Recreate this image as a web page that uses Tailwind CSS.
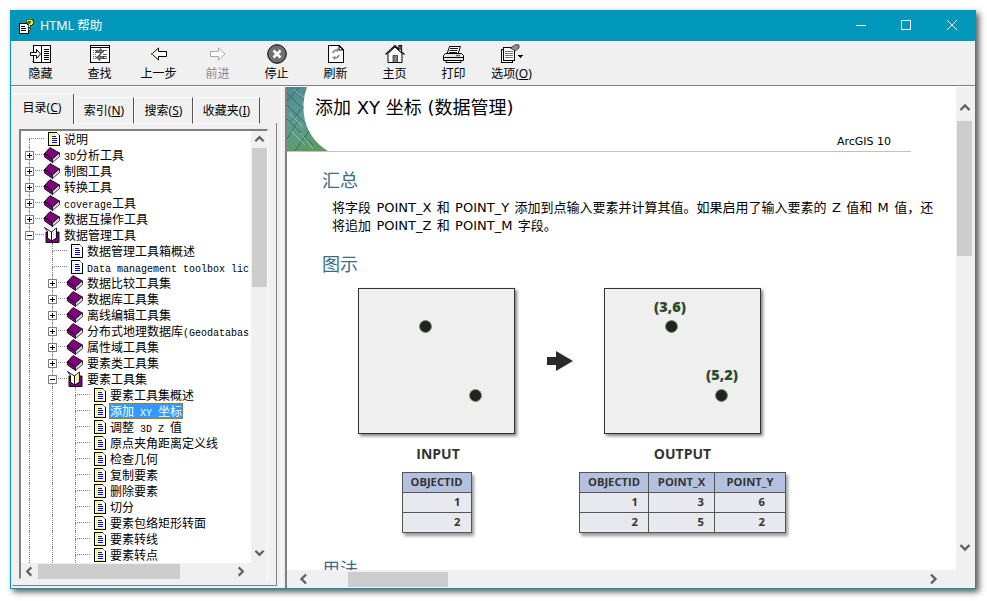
<!DOCTYPE html>
<html lang="en">
<head>
  <meta charset="UTF-8">
  <title>HTML 帮助</title>
  <script src="https://cdn.jsdelivr.net/npm/@tailwindcss/browser@4"></script>
</head>
<body class="bg-white w-[987px] h-[601px] overflow-hidden font-['Noto_Sans','Noto_Sans_CJK_SC',sans-serif] text-[12px] text-black">

  <svg class="hidden">
    <symbol id="doc" viewBox="0 0 12 16" shape-rendering="crispEdges">
      <path d="M.5 1.500H8.500L11.500 4.500V14.500H.5Z" fill="#fff" stroke="#000"/>
      <path d="M9 2h1v1H9zM10 3h1v1h-1z" fill="#808080"/>
      <path d="M2 3h1v1H2zM4 3h1v1H4zM6 3h1v1H6zM2 5h1v1H2zM2 7h1v1H2zM2 9h1v1H2zM2 11h1v1H2zM2 13h1v1H2zM4 13h1v1H4zM6 13h1v1H6zM8 13h1v1H8z" fill="#f0f000"/>
      <path d="M4 5h4v1H4zM4 7h5v1H4zM4 9h5v1H4zM4 11h5v1H4z" fill="#0000ff"/>
    </symbol>
    <symbol id="book" viewBox="0 0 16 16">
      <path d="M.5 6.500 6 .5 15.500 6 8.500 12Z" fill="#800080" stroke="#000" stroke-width=".8"/>
      <path d="M.5 6.500 8.500 12V15.500L.5 10Z" fill="#800080" stroke="#000" stroke-width=".8"/>
      <path d="M8.500 12 15.500 6V9.500L8.500 15.500Z" fill="#fff" stroke="#000" stroke-width=".8"/>
      <path d="M9.500 13.500 14.500 9" stroke="#999" stroke-width=".7"/>
    </symbol>
    <symbol id="open" viewBox="0 0 16 16">
      <path d="M2 5V15.500H15V5Z" fill="#800080" stroke="#000" stroke-width=".9"/>
      <path d="M.5.500 7.500 5V14L3.500 11V4.500Z" fill="#fff" stroke="#000" stroke-width=".9"/>
      <path d="M7.500 5 12.500 1V11L7.500 14Z" fill="#fff" stroke="#000" stroke-width=".9"/>
      <path d="M9 5h1v1H9zM11 4h1v1h-1zM9 7h1v1H9zM11 6h1v1h-1zM9 9h1v1H9zM11 8h1v1h-1z" fill="#e0e000"/>
    </symbol>
    <symbol id="up" viewBox="0 0 12 8"><path d="M1.500 6.500 6 2l4.500 4.500" fill="none" stroke="#606060" stroke-width="2.400"/></symbol>
    <symbol id="down" viewBox="0 0 12 8"><path d="M1.500 1.500 6 6l4.500-4.500" fill="none" stroke="#606060" stroke-width="2.400"/></symbol>
    <symbol id="left" viewBox="0 0 8 12"><path d="M6.500 1.500 2 6l4.500 4.500" fill="none" stroke="#606060" stroke-width="2.400"/></symbol>
    <symbol id="right" viewBox="0 0 8 12"><path d="M1.500 1.500 6 6l-4.500 4.500" fill="none" stroke="#606060" stroke-width="2.400"/></symbol>
  </svg>

  <div class="mt-[10px] ml-[10px] w-[966px] h-[579px] flex flex-col border border-[#0097ba] bg-[#f0f0f0] shadow-[3px_3px_6px_rgba(0,0,0,0.65)]">

    <!-- title bar -->
    <div class="h-[30px] shrink-0 bg-[#0097ba] flex items-center text-white">
      <svg class="ml-[8px] w-[15px] h-[15px]" viewBox="0 0 15 15" shape-rendering="crispEdges">
        <path d="M.5 4.500H7.500L9.500 6.500V14.500H.5Z" fill="#fff" stroke="#000"/>
        <path d="M2 7h4v1H2zM2 9h5v1H2zM2 11h5v1H2z" fill="#000"/>
        <path d="M7 3V1h1V0h5v1h1v4h-1v1h-2v2H9V5h1V4h1V2H9v1Z" fill="#ffe800" stroke="#000" stroke-width=".5"/>
        <path d="M9 9h2v2H9z" fill="#ffe800" stroke="#000" stroke-width=".5"/>
      </svg>
      <span class="ml-[6px] text-[12.500px] leading-none">HTML 帮助</span>
      <div class="ml-auto flex items-center pb-[2px]">
        <svg class="w-[10px] h-[10px] mr-[35px]" viewBox="0 0 10 10"><path d="M0 5.500h10" stroke="#fff"/></svg>
        <svg class="w-[10px] h-[10px] mr-[36px]" viewBox="0 0 10 10"><path d="M.5.500h9v9h-9z" fill="none" stroke="#fff"/></svg>
        <svg class="w-[10px] h-[10px] mr-[18px]" viewBox="0 0 10 10"><path d="M0 0l10 10M10 0 0 10" stroke="#fff"/></svg>
      </div>
    </div>

    <!-- toolbar -->
    <div class="h-[45px] shrink-0 flex items-start border-b border-[#808080]">
      <button class="w-[59px] flex flex-col items-center">
        <svg class="mt-[3px] w-[22px] h-[20px]" viewBox="0 0 22 20" shape-rendering="crispEdges">
          <path d="M3.500 1.500H20.500V18.500H3.500Z" fill="#fff" stroke="#000"/>
          <path d="M11 2h1v16h-1z" fill="#000"/>
          <path d="M14 5h5v1h-5zM14 7h5v1h-5zM14 9h5v1h-5zM14 11h5v1h-5zM14 13h5v1h-5zM14 15h5v1h-5z" fill="#000"/>
          <path d="M.5 8.500H6.500V5.500L10.500 10 6.500 14.500V11.500H.5Z" fill="#fff" stroke="#000" shape-rendering="geometricPrecision"/>
          <path d="M2 17h1v1H2z" fill="#00c000"/>
        </svg>
        <span class="mt-[1px] leading-[18px]">隐藏</span>
      </button>
      <button class="w-[59px] flex flex-col items-center">
        <svg class="mt-[3px] w-[20px] h-[20px]" viewBox="0 0 20 20" shape-rendering="crispEdges">
          <path d="M.5 1.500H19.500V18.500H.5Z" fill="#fff" stroke="#000"/>
          <path d="M.5 3.500H19.500" stroke="#000"/>
          <path d="M3 6h1v1H3zM5 6h1v1H5zM3 8h1v1H3zM5 8h1v1H5zM3 10h1v1H3zM5 10h1v1H5zM3 12h1v1H3zM5 12h1v1H5zM3 14h1v1H3zM5 14h1v1H5zM13 6h4v1h-4zM13 10h4v1h-4zM13 12h4v1h-4zM13 14h4v1h-4z" fill="#666"/>
          <path d="M6 6.500H10V4.500L14 7.500 10 10.500V8.500H6Z" fill="#777" stroke="#000" stroke-width=".5" shape-rendering="geometricPrecision"/>
          <path d="M14 12.500H10V10.500L6 13.500 10 16.500V14.500H14Z" fill="#777" stroke="#000" stroke-width=".5" shape-rendering="geometricPrecision"/>
        </svg>
        <span class="mt-[1px] leading-[18px]">查找</span>
      </button>
      <button class="w-[59px] flex flex-col items-center">
        <svg class="mt-[3px] w-[20px] h-[20px]" viewBox="0 0 20 20">
          <path d="M3 10 9.500 4V7.500H17.500V12.500H9.500V16Z" fill="#fff" stroke="#000"/>
          <rect x="2" y="9" width="2" height="2" fill="#00b000"/>
        </svg>
        <span class="mt-[1px] leading-[18px]">上一步</span>
      </button>
      <button class="w-[59px] flex flex-col items-center text-[#8a8a8a]">
        <svg class="mt-[3px] w-[20px] h-[20px]" viewBox="0 0 20 20">
          <path d="M17 10 10.500 4V7.500H2.500V12.500H10.500V16Z" fill="#fff" stroke="#a8a8a8"/>
        </svg>
        <span class="mt-[1px] leading-[18px]">前进</span>
      </button>
      <button class="w-[59px] flex flex-col items-center">
        <svg class="mt-[3px] w-[20px] h-[20px]" viewBox="0 0 20 20">
          <circle cx="10" cy="10" r="9.300" fill="#6f6f6f" stroke="#000"/>
          <path d="M6.500 6.500l7 7M13.500 6.500l-7 7" stroke="#fff" stroke-width="2.600"/>
        </svg>
        <span class="mt-[1px] leading-[18px]">停止</span>
      </button>
      <button class="w-[59px] flex flex-col items-center">
        <svg class="mt-[3px] w-[20px] h-[20px]" viewBox="0 0 20 20">
          <path d="M2.500 1.500H13L17.500 6V18.500H2.500Z" fill="#fff" stroke="#000" shape-rendering="crispEdges"/>
          <path d="M13 1.500V6H17.500" fill="none" stroke="#000"/>
          <path d="M7 9a3.500 3.500 0 0 1 5-2.500" fill="none" stroke="#888" stroke-width="1.800"/>
          <path d="M11 4l3 2.500L10.500 8Z" fill="#888"/>
          <path d="M13 11a3.500 3.500 0 0 1-5 2.500" fill="none" stroke="#888" stroke-width="1.800"/>
          <path d="M9 16l-3-2.500L9.500 12Z" fill="#888"/>
        </svg>
        <span class="mt-[1px] leading-[18px]">刷新</span>
      </button>
      <button class="w-[59px] flex flex-col items-center">
        <svg class="mt-[3px] w-[20px] h-[20px]" viewBox="0 0 20 20">
          <path d="M.5 10.500 10 1.500 14 5.500V1.500H16.500V8L19.500 10.500" fill="none" stroke="#000" stroke-width="1.200"/>
          <path d="M3 9.500V18.500H17V9.500L10 3Z" fill="#fff" stroke="#000"/>
          <path d="M8 11.500H12.500V18.500H8Z" fill="#808080" stroke="#000" stroke-width=".6"/>
          <path d="M15 2h1.500v4H15z" fill="#555"/>
        </svg>
        <span class="mt-[1px] leading-[18px]">主页</span>
      </button>
      <button class="w-[59px] flex flex-col items-center">
        <svg class="mt-[3px] w-[21px] h-[20px]" viewBox="0 0 21 20">
          <path d="M6.500 2.500H17.500L15 10H4Z" fill="#fff" stroke="#000"/>
          <path d="M7 4.500h8M6.500 6.500h8M6 8.500h8" stroke="#000" stroke-width=".9"/>
          <path d="M2.500 9.500H18.500L20.500 11.500V16.500H.5V11.500Z" fill="#e6e6e6" stroke="#000"/>
          <path d="M1 13.500h19" stroke="#000"/>
          <path d="M3 16.500H18V18.500H3Z" fill="#fff" stroke="#000"/>
          <path d="M13 11.500h4" stroke="#666" stroke-width="1.500"/>
          <rect x="18" y="17" width="1" height="1" fill="#00b0c0"/>
        </svg>
        <span class="mt-[1px] leading-[18px]">打印</span>
      </button>
      <button class="w-[59px] flex flex-col items-center -ml-px">
        <svg class="mt-[3px] w-[22px] h-[20px]" viewBox="0 0 22 20" shape-rendering="crispEdges">
          <path d="M.5 5.500H11.500V18.500H.5Z" fill="#fff" stroke="#000"/>
          <path d="M2.500 3.500H13.500V16.500H2.500Z" fill="#fff" stroke="#000"/>
          <path d="M4 7h8v1H4zM4 9h8v1H4zM4 11h8v1H4zM4 13h8v1H4z" fill="#777"/>
          <path d="M9 4 15 .5 18 1V4L14 7 11 5Z" fill="#909090" stroke="#000" stroke-width=".6" shape-rendering="geometricPrecision"/>
          <path d="M17 11h5v1h-1v1h-1v1h-1v-1h-1v-1h-1z" fill="#000"/>
        </svg>
        <span class="mt-[1px] leading-[18px]">选项(<u>O</u>)</span>
      </button>
    </div>

    <div class="flex-1 min-h-0 flex border-t border-white">

      <!-- navigation pane -->
      <div class="w-[270px] shrink-0 flex flex-col pl-px pt-[6px] pb-[2px]">
        <div class="flex items-end h-[31px] relative z-10 -mb-px">
          <div class="h-[31px] w-[62px] flex items-center justify-center bg-[#f0f0f0] border border-b-0 border-white border-r-[#555] rounded-t-[2px] pb-[3px] pr-[2px]">目录(<u>C</u>)</div>
          <div class="h-[27px] w-[60px] flex items-center justify-center border-t border-l border-white border-r border-r-[#555] border-b border-b-white">索引(<u>N</u>)</div>
          <div class="h-[27px] w-[59px] flex items-center justify-center border-t border-l border-white border-r border-r-[#555] border-b border-b-white">搜索(<u>S</u>)</div>
          <div class="h-[27px] w-[67px] flex items-center justify-center border-t border-l border-white border-r border-r-[#555] border-b border-b-white">收藏夹(<u>I</u>)</div>
        </div>
        <div class="flex-1 min-h-0 w-[265px] border-l border-white border-r border-r-[#808080] border-b border-b-[#808080] pl-[6px] pr-[8px] pt-[6px] pb-[6px]">
          <!-- tree box -->
          <div class="h-full grid grid-cols-[230px_16px] grid-rows-[432px_16px] border border-[#808080] border-t-2 border-l-2 border-r-white border-b-white bg-white">
            <div id="tree" class="overflow-hidden pl-[8px] whitespace-nowrap"></div>
            <div class="bg-[#f0f0f0] flex flex-col items-center">
              <svg class="mt-[4px] w-[11px] h-[8px]"><use href="#up"/></svg>
              <div class="mt-[5px] w-[15px] h-[139px] bg-[#cdcdcd]"></div>
              <svg class="mt-auto mb-[6px] w-[11px] h-[8px]"><use href="#down"/></svg>
            </div>
            <div class="bg-[#f0f0f0] flex items-center">
              <svg class="ml-[4px] w-[8px] h-[11px]"><use href="#left"/></svg>
              <div class="ml-[5px] w-[142px] h-[15px] bg-[#cdcdcd]"></div>
              <svg class="ml-auto mr-[6px] w-[8px] h-[11px]"><use href="#right"/></svg>
            </div>
            <div class="bg-[#f0f0f0]"></div>
          </div>
        </div>
      </div>

      <!-- splitter -->
      <div class="w-[4px] shrink-0 border-l border-white"></div>

      <!-- content pane -->
      <div class="flex-1 min-w-0 grid grid-cols-[669px_19px] grid-rows-[483px_18px] border-l-2 border-[#808080] bg-[#f0f0f0]">
        <div class="overflow-hidden bg-white font-['DejaVu_Sans','Noto_Sans_CJK_SC',sans-serif]">
          <div class="relative w-[624px] h-[65px] border-b border-[#c4c2b8] flex flex-col justify-between pl-[28px] pr-[20px]">
            <svg class="absolute left-0 top-0 w-[44px] h-[64px]" viewBox="0 0 44 64">
              <defs>
                <linearGradient id="banner" x1="0" y1="0" x2="0.4" y2="1">
                  <stop offset="0" stop-color="#4c8790"/>
                  <stop offset="0.5" stop-color="#5f9c96"/>
                  <stop offset="1" stop-color="#5b9a62"/>
                </linearGradient>
                <clipPath id="bannerclip"><path d="M0 0H20Q14 16 18 34 24 54 41 64H0Z"/></clipPath>
              </defs>
              <g clip-path="url(#bannerclip)">
                <rect width="44" height="64" fill="url(#banner)"/>
                <path d="M0 6 14 20M0 18 20 38M0 32 26 58M4 0 20 16M8 64 22 44M0 52 12 32M12 0 0 14M18 18 4 34" stroke="#2f5f68" stroke-width=".8" fill="none"/>
                <path d="M6 2 18 12M2 26 16 40M4 44 18 58M14 46 26 62" stroke="#9cc8bc" stroke-width=".8" fill="none"/>
              </g>
            </svg>
            <h1 class="relative text-[18px] leading-[24px] mt-[9px] font-normal">添加 XY 坐标 (数据管理)</h1>
            <div class="self-end text-[11px] leading-[14px] mb-[2px]">ArcGIS 10</div>
          </div>
          <div class="pl-[35px] whitespace-nowrap">
            <h2 class="mt-[17px] text-[18px] leading-[24px] text-[#3a6d86] font-normal">汇总</h2>
            <p class="mt-[6px] pl-[10px] text-[13px] leading-[18px] [word-spacing:1.250px]">将字段 POINT_X 和 POINT_Y 添加到点输入要素并计算其值。如果启用了输入要素的 Z 值和 M 值，还<br>将追加 POINT_Z 和 POINT_M 字段。</p>
            <h2 class="mt-[18px] text-[18px] leading-[24px] text-[#3a6d86] font-normal">图示</h2>

            <div class="mt-[11px] ml-[36px] flex items-start font-['Open_Sans',sans-serif]">
              <div class="w-[157px] flex flex-col items-center">
                <div class="relative w-[157px] h-[146px] bg-[#efefef] border border-[#333] shadow-[2px_2px_3px_rgba(0,0,0,0.5)]">
                  <div class="absolute left-[60px] top-[31px] w-[13px] h-[13px] rounded-full bg-[#222] border border-[#6f9a5a]"></div>
                  <div class="absolute left-[110px] top-[100px] w-[13px] h-[13px] rounded-full bg-[#222] border border-[#6f9a5a]"></div>
                </div>
                <div class="mt-[10px] pl-[3px] text-[14px] leading-[20px] font-bold text-[#333]">INPUT</div>
                <table class="mt-[8px] border-collapse table-fixed shrink-0 w-[70px] text-[11.200px] font-bold text-[#333] shadow-[2px_3px_3px_rgba(0,0,0,0.4)]">
                  <tr class="h-[20px] bg-[#b4c1de]"><th class="border border-[#555] text-center font-bold">OBJECTID</th></tr>
                  <tr class="h-[20px] bg-[#e8e9ee]"><td class="border border-[#555] text-right pr-[10px]">1</td></tr>
                  <tr class="h-[20px] bg-[#e8e9ee]"><td class="border border-[#555] text-right pr-[10px]">2</td></tr>
                </table>
              </div>
              <svg class="mt-[63px] ml-[32px] mr-[31px] w-[26px] h-[20px]" viewBox="0 0 26 20"><path d="M0 6H9V0L26 10 9 20V14H0Z" fill="#2b2b2b"/></svg>
              <div class="w-[157px] flex flex-col items-center">
                <div class="relative w-[157px] h-[146px] bg-[#efefef] border border-[#333] shadow-[2px_2px_3px_rgba(0,0,0,0.5)]">
                  <div class="absolute left-[43px] top-[8px] w-[44px] text-center text-[14.500px] leading-[20px] font-extrabold text-[#2c4a2c]">(3,6)</div>
                  <div class="absolute left-[60px] top-[31px] w-[13px] h-[13px] rounded-full bg-[#222] border border-[#6f9a5a]"></div>
                  <div class="absolute left-[95px] top-[76px] w-[44px] text-center text-[14.500px] leading-[20px] font-extrabold text-[#2c4a2c]">(5,2)</div>
                  <div class="absolute left-[110px] top-[100px] w-[13px] h-[13px] rounded-full bg-[#222] border border-[#6f9a5a]"></div>
                </div>
                <div class="mt-[10px] text-[14px] leading-[20px] font-bold text-[#333]">OUTPUT</div>
                <table class="mt-[8px] border-collapse table-fixed shrink-0 w-[206px] text-[11.200px] font-bold text-[#333] shadow-[2px_3px_3px_rgba(0,0,0,0.4)]">
                  <tr class="h-[20px] bg-[#b4c1de]">
                    <th class="w-[69px] border border-[#555] text-center font-bold">OBJECTID</th>
                    <th class="w-[66px] border border-[#555] text-center font-bold">POINT_X</th>
                    <th class="w-[71px] border border-[#555] text-center font-bold">POINT_Y</th>
                  </tr>
                  <tr class="h-[20px] bg-[#e8e9ee]"><td class="border border-[#555] text-right pr-[10px]">1</td><td class="border border-[#555] text-right pr-[10px]">3</td><td class="border border-[#555] text-right pr-[20px]">6</td></tr>
                  <tr class="h-[20px] bg-[#e8e9ee]"><td class="border border-[#555] text-right pr-[10px]">2</td><td class="border border-[#555] text-right pr-[10px]">5</td><td class="border border-[#555] text-right pr-[20px]">2</td></tr>
                </table>
              </div>
            </div>

            <h2 class="mt-[25px] text-[18px] leading-[24px] text-[#3a6d86] font-normal">用法</h2>
          </div>
        </div>
        <div class="flex flex-col items-center pr-[2px]">
          <svg class="mt-[16px] w-[12px] h-[9px]"><use href="#up"/></svg>
          <div class="mt-[9px] w-[15px] h-[135px] bg-[#cdcdcd]"></div>
          <svg class="mt-auto mb-[18px] w-[12px] h-[9px]"><use href="#down"/></svg>
        </div>
        <div class="flex items-center">
          <svg class="ml-[12px] w-[9px] h-[12px]"><use href="#left"/></svg>
          <div class="ml-[40px] w-[100px] h-[15px] bg-[#cdcdcd]"></div>
          <svg class="ml-auto mr-[18px] w-[9px] h-[12px]"><use href="#right"/></svg>
        </div>
        <div></div>
      </div>
    </div>
  </div>

  <script>
    // level, icon, label, selected
    var rows = [
      [0, "doc", "说明"],
      [0, "book", "3D分析工具"],
      [0, "book", "制图工具"],
      [0, "book", "转换工具"],
      [0, "book", "coverage工具"],
      [0, "book", "数据互操作工具"],
      [0, "open", "数据管理工具"],
      [1, "doc", "数据管理工具箱概述"],
      [1, "doc", "Data management toolbox lic"],
      [1, "book", "数据比较工具集"],
      [1, "book", "数据库工具集"],
      [1, "book", "离线编辑工具集"],
      [1, "book", "分布式地理数据库(Geodatabas"],
      [1, "book", "属性域工具集"],
      [1, "book", "要素类工具集"],
      [1, "open", "要素工具集"],
      [2, "doc", "要素工具集概述"],
      [2, "doc", "添加 XY 坐标", true],
      [2, "doc", "调整 3D Z 值"],
      [2, "doc", "原点夹角距离定义线"],
      [2, "doc", "检查几何"],
      [2, "doc", "复制要素"],
      [2, "doc", "删除要素"],
      [2, "doc", "切分"],
      [2, "doc", "要素包络矩形转面"],
      [2, "doc", "要素转线"],
      [2, "doc", "要素转点"]
    ];

    var guide = '<div class="w-[23px] h-4 shrink-0 border-l border-dotted border-[#808080]"></div>';

    function label(text) {
      // the latin part of a label is narrower than the 12px CJK text
      return text.replace(/[\x00-\x7f]+/g, function (m) {
        return `<span class="text-[10px] font-['Liberation_Mono',monospace] whitespace-pre">` + m + `</span>`;
      });
    }

    var html = "";
    rows.forEach(function (r, i) {
      var top = i === 0
        ? '<div class="h-2 border-b border-dotted border-[#808080]"></div>'
        : '<div class="h-2 border-l border-b border-dotted border-[#808080]"></div>';
      var toggle = "";
      if (r[1] !== "doc") {
        toggle = '<div class="absolute left-[-4px] top-[4px] w-[9px] h-[9px] border border-[#808080] bg-white flex items-center justify-center">' +
          '<svg class="w-[7px] h-[7px]" viewBox="0 0 7 7" shape-rendering="crispEdges"><path d="' +
          (r[1] === "book" ? 'M1 3h5v1H1zM3 1h1v5H3z' : 'M1 3h5v1H1z') + '" fill="#000"/></svg></div>';
      }
      var icon = r[1] === "doc"
        ? '<svg class="w-[12px] h-4 ml-[4px]"><use href="#doc"/></svg>'
        : '<svg class="w-4 h-4"><use href="#' + r[1] + '"/></svg>';
      var text = r[3]
        ? '<span class="ml-[3px] px-px h-4 leading-[18px] bg-[#3399ff] text-white outline-1 outline-dotted outline-[#b06a10] -outline-offset-1">' + label(r[2]) + '</span>'
        : '<span class="ml-[3px] px-px h-4 leading-[18px]">' + label(r[2]) + '</span>';
      html += '<div class="flex h-4 items-start">' + guide.repeat(r[0]) +
        '<div class="relative w-[15px] h-4 shrink-0">' + top +
        '<div class="h-2 border-l border-dotted border-[#808080]"></div>' + toggle + '</div>' +
        icon + text + '</div>';
    });
    document.getElementById("tree").innerHTML = html;
  </script>
</body>
</html>
